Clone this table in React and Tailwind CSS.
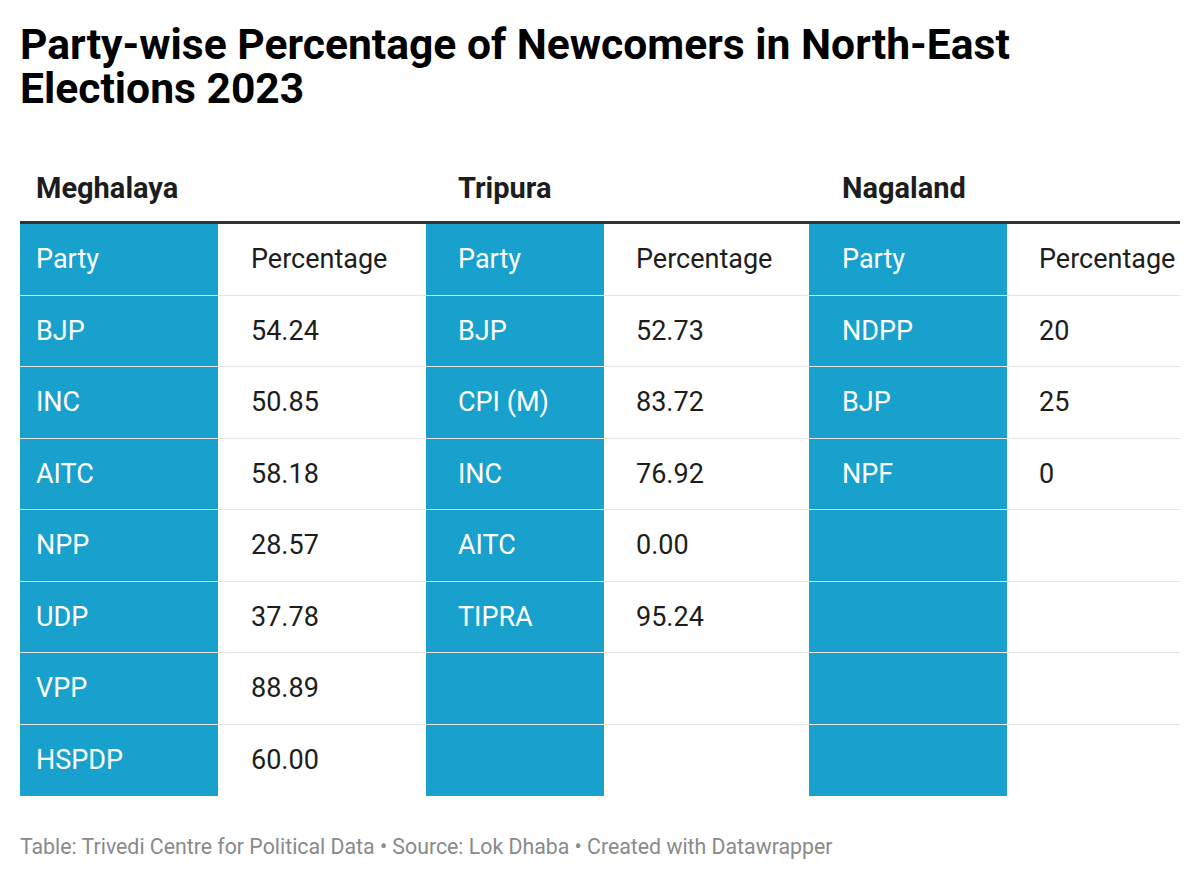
import React from "react";

const meghalaya = [
  ["BJP", "54.24"],
  ["INC", "50.85"],
  ["AITC", "58.18"],
  ["NPP", "28.57"],
  ["UDP", "37.78"],
  ["VPP", "88.89"],
  ["HSPDP", "60.00"],
];

const tripura = [
  ["BJP", "52.73"],
  ["CPI (M)", "83.72"],
  ["INC", "76.92"],
  ["AITC", "0.00"],
  ["TIPRA", "95.24"],
];

const nagaland = [
  ["NDPP", "20"],
  ["BJP", "25"],
  ["NPF", "0"],
];

function App() {
  // header row + 7 data rows
  const rows = [["Party", "Percentage"], ...meghalaya].map((m, i) => {
    const t = i === 0 ? ["Party", "Percentage"] : tripura[i - 1] || ["", ""];
    const n = i === 0 ? ["Party", "Percentage"] : nagaland[i - 1] || ["", ""];
    return [...m, ...t, ...n];
  });

  return (
    <div
      className="w-[1200px] h-[879px] bg-white px-[20px] pt-[22px]"
      style={{ fontFamily: "Roboto, 'Liberation Sans', sans-serif" }}
    >
      <h1 className="text-[42.6px] leading-[44px] font-bold text-black">
        Party-wise Percentage of Newcomers in North-East
        <br />
        Elections 2023
      </h1>

      <div className="mt-[61px] grid grid-cols-[406px_383px_371px] text-[29px] font-bold text-[#1d1d1d] leading-[34px] pb-[16px] border-b-[3px] border-[#333]">
        <div className="pl-[16px]">Meghalaya</div>
        <div className="pl-[32px]">Tripura</div>
        <div className="pl-[33px]">Nagaland</div>
      </div>

      <div>
        {rows.map((r, i) => (
          <div
            key={i}
            className={
              "grid grid-cols-[198px_208px_178px_205px_198px_173px] h-[71.5px] text-[27px] " +
              (i < rows.length - 1 ? "border-b border-black/10" : "")
            }
          >
            <div className="bg-[#19a1cd] text-white flex items-center pl-[16px]">{r[0]}</div>
            <div className="text-[#1d1d1d] flex items-center pl-[33px]">{r[1]}</div>
            <div className="bg-[#19a1cd] text-white flex items-center pl-[32px]">{r[2]}</div>
            <div className="text-[#1d1d1d] flex items-center pl-[32px]">{r[3]}</div>
            <div className="bg-[#19a1cd] text-white flex items-center pl-[33px]">{r[4]}</div>
            <div className="text-[#1d1d1d] flex items-center pl-[32px] whitespace-nowrap">{r[5]}</div>
          </div>
        ))}
      </div>

      <p className="mt-[39px] text-[21.3px] text-[#8a8a8a] leading-[24px]">
        Table: Trivedi Centre for Political Data • Source: Lok Dhaba • Created with Datawrapper
      </p>
    </div>
  );
}

export default App;
